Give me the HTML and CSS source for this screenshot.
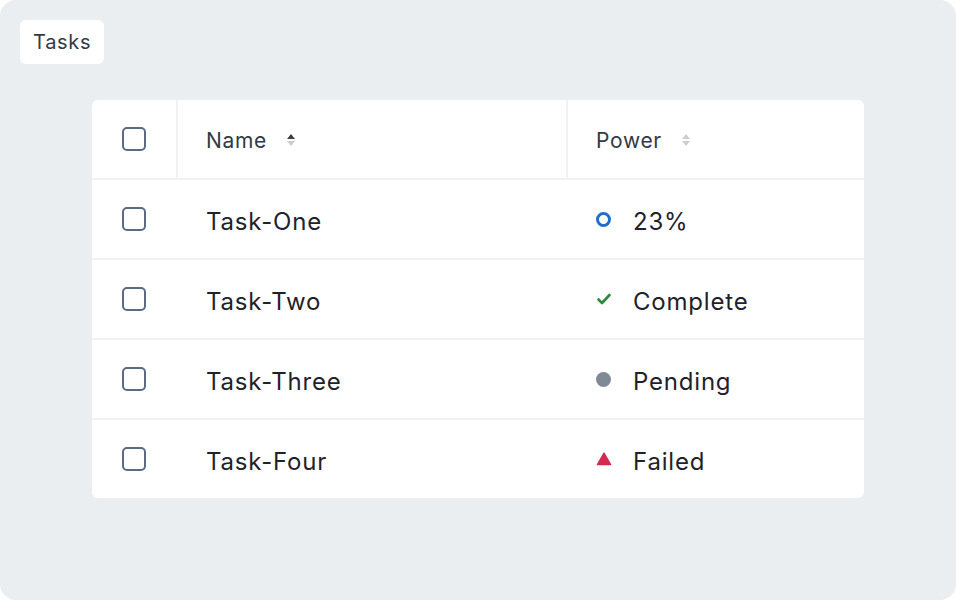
FILE: index.html
```html
<!DOCTYPE html>
<html>
<head>
<meta charset="utf-8">
<link rel="stylesheet" href="styles.css">
</head>
<body>
<div class="frame">
  <div class="label">Tasks</div>
  <div class="table">
    <div class="row head">
      <div class="cell check divider"><span class="box"></span></div>
      <div class="cell name divider"><span class="txt">Name</span><span class="sort"><span class="up dark"></span><span class="down"></span></span></div>
      <div class="cell power"><span class="txt">Power</span><span class="sort"><span class="up"></span><span class="down"></span></span></div>
    </div>
    <div class="row">
      <div class="cell check"><span class="box"></span></div>
      <div class="cell name"><span class="txt">Task-One</span></div>
      <div class="cell power"><span class="icon ring"></span><span class="txt">23%</span></div>
    </div>
    <div class="row">
      <div class="cell check"><span class="box"></span></div>
      <div class="cell name"><span class="txt">Task-Two</span></div>
      <div class="cell power"><svg class="icon" width="16" height="16" viewBox="0 0 16 16"><path d="M2.5 8.5 L6 12 L13.5 4" fill="none" stroke="#2b8a3e" stroke-width="2.6" stroke-linecap="round" stroke-linejoin="round"/></svg><span class="txt">Complete</span></div>
    </div>
    <div class="row">
      <div class="cell check"><span class="box"></span></div>
      <div class="cell name"><span class="txt">Task-Three</span></div>
      <div class="cell power"><span class="icon dot"></span><span class="txt">Pending</span></div>
    </div>
    <div class="row last">
      <div class="cell check"><span class="box"></span></div>
      <div class="cell name"><span class="txt">Task-Four</span></div>
      <div class="cell power"><svg class="icon" width="16" height="16" viewBox="0 0 16 16"><path d="M8 2.2 L14.6 13.6 L1.4 13.6 Z" fill="#d42a52" stroke="#d42a52" stroke-width="1.4" stroke-linejoin="round"/></svg><span class="txt">Failed</span></div>
    </div>
  </div>
</div>
</body>
</html>
```
FILE: styles.css
```css
html, body {
  margin: 0;
  padding: 0;
  background: #ffffff;
}
body {
  font-family: "Inter", "Liberation Sans", sans-serif;
  color: #22262b;
}
.frame {
  width: 956px;
  height: 600px;
  box-sizing: border-box;
  background: #ebeef1;
  border-radius: 16px;
  padding: 20px;
  display: flex;
  flex-direction: column;
  align-items: flex-start;
}
.label {
  background: #fff;
  border-radius: 6px;
  height: 44px;
  padding: 0 13px 0 13px;
  display: flex;
  align-items: center;
  font-size: 20px;
  letter-spacing: 0.7px;
  color: #333a44;
}
.table {
  margin-top: 36px;
  margin-left: 72px;
  width: 772px;
  background: #fff;
  border-radius: 6px;
  overflow: hidden;
}
.row {
  display: grid;
  grid-template-columns: 86px 390px 1fr;
  height: 80px;
  box-sizing: border-box;
  border-bottom: 2px solid #f0f1f2;
}
.row.last {
  border-bottom: none;
  height: 78px;
}
.cell {
  display: flex;
  align-items: center;
  font-size: 24px;
  letter-spacing: 0.8px;
  color: #1f2329;
}
.txt {
  padding-top: 4px;
}
.head .cell {
  font-size: 21px;
  letter-spacing: 0.7px;
  color: #333a44;
}
.head .txt {
  padding-top: 2px;
}
.divider {
  border-right: 2px solid #f0f1f2;
}
.check {
  padding-left: 30px;
}
.name {
  padding-left: 28px;
}
.power {
  padding-left: 28px;
}
.box {
  width: 24px;
  height: 24px;
  box-sizing: border-box;
  border: 2px solid #5b6b80;
  border-radius: 5px;
}
.sort {
  display: inline-flex;
  flex-direction: column;
  gap: 2px;
  margin-left: 20px;
  padding-top: 2px;
}
.up, .down {
  width: 0;
  height: 0;
  border-left: 4px solid transparent;
  border-right: 4px solid transparent;
}
.up {
  border-bottom: 5px solid #cbcdd0;
}
.up.dark {
  border-bottom-color: #3a3f46;
}
.down {
  border-top: 5px solid #cbcdd0;
}
.icon {
  width: 16px;
  height: 16px;
  margin-right: 21px;
  box-sizing: border-box;
  flex: none;
}
.ring {
  border: 3px solid #1f6fcf;
  border-radius: 50%;
  width: 15px;
  height: 15px;
  margin-right: 22px;
}
.dot {
  background: #808a96;
  border-radius: 50%;
  width: 15px;
  height: 15px;
  margin-right: 22px;
}
```
